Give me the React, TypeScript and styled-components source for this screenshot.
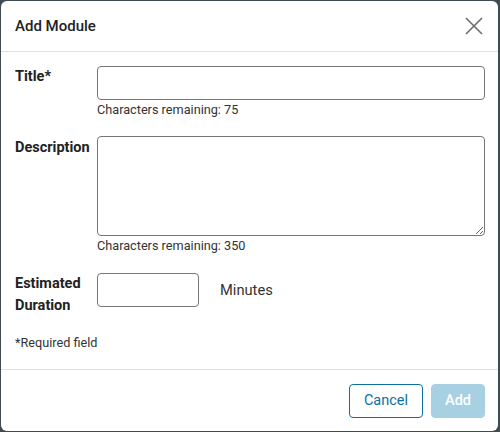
import React, { useState } from "react";
import styled, { createGlobalStyle } from "styled-components";

const GlobalStyle = createGlobalStyle`
  html, body {
    margin: 0;
    padding: 0;
    background: #3f4c52;
    font-family: Roboto, "Noto Sans", "Liberation Sans", sans-serif;
    color: #212529;
  }
`;

const Modal = styled.div`
  margin: 1px 2px 0 1px;
  width: 497px;
  height: 430px;
  background: #fff;
  border-radius: 6px;
  display: flex;
  flex-direction: column;
  box-sizing: border-box;
`;

const Header = styled.div`
  display: flex;
  align-items: center;
  justify-content: space-between;
  height: 50px;
  padding: 0 12px 0 14px;
  border-bottom: 1px solid #dee2e6;
`;

const Heading = styled.h2`
  margin: 0;
  font-size: 15px;
  font-weight: 500;
  color: #222;
`;

const CloseButton = styled.button`
  border: none;
  background: none;
  padding: 0;
  width: 24px;
  height: 24px;
  display: flex;
  align-items: center;
  justify-content: center;
  cursor: pointer;
`;

const Body = styled.div`
  flex: 1;
  padding: 14px 13px 0 14px;
  display: flex;
  flex-direction: column;
`;

const Row = styled.div<{ $gap?: number }>`
  display: grid;
  grid-template-columns: 82px 1fr;
  margin-bottom: ${(p) => p.$gap ?? 0}px;
`;

const Label = styled.label<{ $offset?: number }>`
  font-size: 14.5px;
  font-weight: 700;
  line-height: 22px;
  padding-top: ${(p) => p.$offset ?? 0}px;
  color: #222;
  white-space: nowrap;
`;

const Field = styled.div`
  display: flex;
  flex-direction: column;
`;

const TextInput = styled.input`
  box-sizing: border-box;
  height: 34px;
  width: 100%;
  border: 1px solid #767676;
  border-radius: 4px;
  font: inherit;
  font-size: 14px;
  padding: 4px 8px;
  outline: none;
`;

const TextArea = styled.textarea`
  box-sizing: border-box;
  height: 100px;
  width: 100%;
  border: 1px solid #767676;
  border-radius: 4px;
  font: inherit;
  font-size: 14px;
  padding: 4px 8px;
  outline: none;
  display: block;
`;

const Helper = styled.div`
  font-size: 12.7px;
  line-height: 16px;
  margin-top: 2px;
  color: #333;
`;

const DurationWrap = styled.div`
  display: flex;
  align-items: center;
  align-self: start;
  margin-top: 5px;
  gap: 21px;
`;

const DurationInput = styled(TextInput)`
  width: 102px;
`;

const Unit = styled.span`
  font-size: 14.7px;
  color: #333;
`;

const Note = styled.div`
  font-size: 12.7px;
  color: #333;
  margin-top: 18px;
`;

const Footer = styled.div`
  display: flex;
  justify-content: flex-end;
  align-items: center;
  gap: 8px;
  height: 61px;
  padding: 0 13px 0 0;
  border-top: 1px solid #dee2e6;
`;

const Button = styled.button<{ $primary?: boolean }>`
  height: 34px;
  box-sizing: border-box;
  border-radius: 4px;
  font-family: inherit;
  font-size: 14.5px;
  padding: 0 ${(p) => (p.$primary ? 13 : 14)}px;
  border: 1px solid ${(p) => (p.$primary ? "#a7d0e2" : "#0d6fa0")};
  background: ${(p) => (p.$primary ? "#a7d0e2" : "#fff")};
  color: ${(p) => (p.$primary ? "#fff" : "#0d6fa0")};
  font-weight: ${(p) => (p.$primary ? 500 : 400)};
  cursor: pointer;
`;

export default function App() {
  const [title, setTitle] = useState("");
  const [desc, setDesc] = useState("");
  const [duration, setDuration] = useState("");

  return (
    <>
      <GlobalStyle />
      <Modal>
        <Header>
          <Heading>Add Module</Heading>
          <CloseButton aria-label="Close">
            <svg width="18" height="18" viewBox="0 0 18 18">
              <path d="M1 1 L17 17 M17 1 L1 17" stroke="#6b6b6b" strokeWidth="1.6" fill="none" />
            </svg>
          </CloseButton>
        </Header>
        <Body>
          <Row $gap={18}>
            <Label>Title*</Label>
            <Field>
              <TextInput value={title} maxLength={75} onChange={(e) => setTitle(e.target.value)} />
              <Helper>Characters remaining: {75 - title.length}</Helper>
            </Field>
          </Row>
          <Row $gap={14}>
            <Label $offset={1}>Description</Label>
            <Field>
              <TextArea value={desc} maxLength={350} onChange={(e) => setDesc(e.target.value)} />
              <Helper>Characters remaining: {350 - desc.length}</Helper>
            </Field>
          </Row>
          <Row>
            <Label $offset={5}>
              Estimated
              <br />
              Duration
            </Label>
            <DurationWrap>
              <DurationInput value={duration} onChange={(e) => setDuration(e.target.value)} />
              <Unit>Minutes</Unit>
            </DurationWrap>
          </Row>
          <Note>*Required field</Note>
        </Body>
        <Footer>
          <Button>Cancel</Button>
          <Button $primary disabled>
            Add
          </Button>
        </Footer>
      </Modal>
    </>
  );
}
